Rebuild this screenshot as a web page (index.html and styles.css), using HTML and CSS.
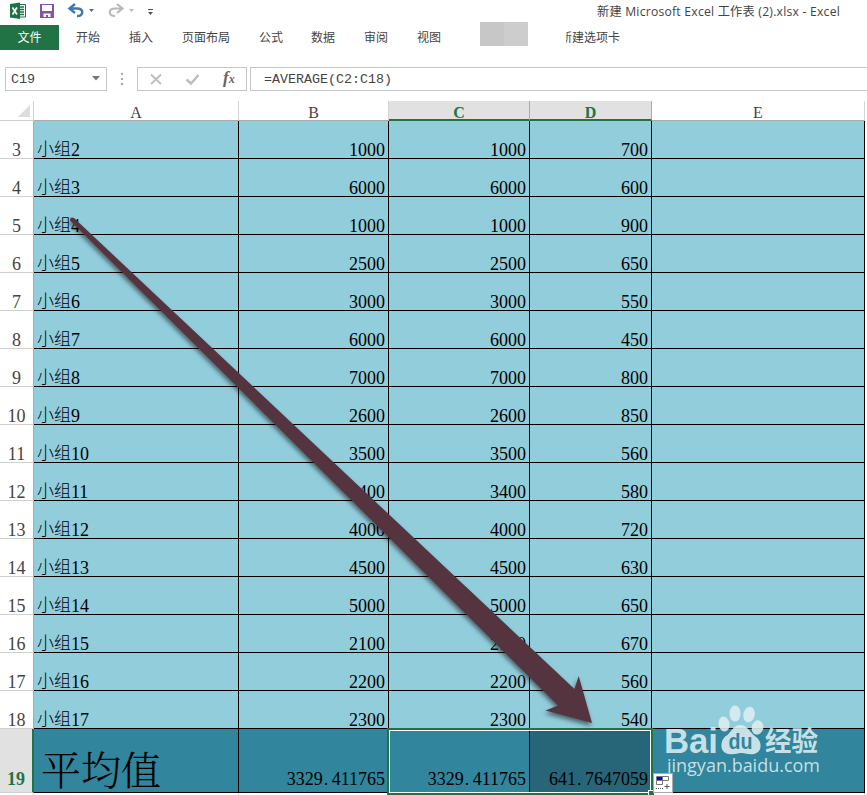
FILE: index.html
```html
<!DOCTYPE html>
<html lang="zh-CN">
<head>
<meta charset="utf-8">
<title>新建 Microsoft Excel 工作表 (2).xlsx - Excel</title>
<link rel="stylesheet" href="styles.css">
</head>
<body>
<header class="titlebar">
  <svg class="quick" width="170" height="24" viewBox="0 0 170 24">
    <path d="M10 4L20 2.500V19L10 17.500Z" fill="#1e7245"/>
    <path d="M20 4.500H25.500V17H20" fill="#fff" stroke="#1e7245"/>
    <path d="M20 7H24M20 9.500H24M20 12H24M20 14.500H24" stroke="#1e7245" stroke-width="1.300"/>
    <path d="M12.500 7.500L17 14.500M17 7.500L12.500 14.500" stroke="#fff" stroke-width="1.700"/>
    <path d="M40 4H54V18H40Z" fill="#8653a8"/>
    <path d="M42 5H52V11H42ZM43.500 13.500H50.500V17H48V15H46V17H43.500Z" fill="#fff"/>
    <path d="M75 4L69.500 8.500L75 13M70.500 8.500H77C84 8.500 84 16 77 16" fill="none" stroke="#3e78b5" stroke-width="2.400"/>
    <path d="M89 9H94L91.500 12Z" fill="#666"/>
    <path d="M117 4L122.500 8.500L117 13M121.500 8.500H115C108 8.500 108 16 115 16" fill="none" stroke="#b9b9b9" stroke-width="2.100"/>
    <path d="M129 9H134L131.500 12Z" fill="#bbb"/>
    <path d="M148 9H153V10H148ZM148 12H153L150.500 15Z" fill="#555"/>
  </svg>
  <span class="doc-title">新建 Microsoft Excel 工作表 (2).xlsx - Excel</span>
</header>
<nav class="tabs">
  <span class="file">文件</span><span class="tab">开始</span><span class="tab">插入</span><span class="tab">页面布局</span><span class="tab">公式</span><span class="tab">数据</span><span class="tab">审阅</span><span class="tab">视图</span><i class="masked"></i><span class="custom">新建选项卡</span>
</nav>
<div class="formula-bar">
  <div class="name-box"><span>C19</span><svg width="8" height="5"><path d="M0 0H8L4 4.500Z" fill="#777"/></svg></div>
  <svg class="dots" width="30" height="24"><path d="M14 6h2v2h-2zM14 11h2v2h-2zM14 16h2v2h-2z" fill="#a6a6a6"/></svg>
  <div class="tools">
    <svg width="80" height="22"><path d="M13 6.500L23 16M23 6.500L13 16" stroke="#bdbdbd" stroke-width="1.800"/><path d="M48.500 11.500L53 15.500L60.500 7" fill="none" stroke="#bdbdbd" stroke-width="2.500"/></svg>
    <em>f<small>x</small></em>
  </div>
  <div class="formula">=AVERAGE(C2:C18)</div>
</div>
<main class="sheet">
  <div class="row heads"><div class="corner"><svg width="12" height="12"><path d="M12 0V12H0Z" fill="#dcdcdc"/></svg></div><div>A</div><div>B</div><div class="picked">C</div><div class="picked">D</div><div>E</div></div>
  <div id="rows"></div>
  <div class="row total"><b>19</b><div class="label">平均值</div><div><span>3329<i class="point">.</i>411765</span></div><div class="sel"><span>3329<i class="point">.</i>411765</span></div><div class="sel active"><span>641<i class="point">.</i>7647059</span></div><div></div></div>
  <div class="row after"><b></b><div></div><div></div><div></div><div></div><div></div></div>
  <div class="selection"><i></i></div>
  <svg class="watermark" width="170" height="80" viewBox="0 0 170 80" fill="#ddeef1" fill-opacity=".88">
    <text x="4" y="50" class="bai" textLength="54" lengthAdjust="spacingAndGlyphs">Bai</text>
    <ellipse cx="64" cy="21" rx="5.500" ry="7.500" transform="rotate(-10 64 21)"/>
    <ellipse cx="75" cy="10.500" rx="5.500" ry="8"/>
    <ellipse cx="89" cy="11.500" rx="5.700" ry="7.800" transform="rotate(12 89 11.500)"/>
    <ellipse cx="97.500" cy="24.500" rx="5.800" ry="7.200" transform="rotate(12 97.500 24.500)"/>
    <path d="M80 22C73 22 72 29 66 33C60 37 59 50 69 51C74 52 77 50 81 50C86 50 89 52 94 51C103 49 102 38 96 34C89 29 88 22 80 22Z"/>
    <text x="68.500" y="46" class="du" textLength="24" lengthAdjust="spacingAndGlyphs">du</text>
    <text x="105" y="48" class="jy" textLength="53" lengthAdjust="spacingAndGlyphs">经验</text>
    <text x="7" y="69" class="url" textLength="153" lengthAdjust="spacingAndGlyphs">jingyan.baidu.com</text>
  </svg>
  <svg class="fill-options" width="20" height="20">
    <rect x=".5" y=".5" width="19" height="19" fill="#fff" stroke="#ababab"/>
    <path d="M3.500 3.500H15.500V7.500H3.500ZM9.500 3.500V7.500M3.500 7.500V11.500H9.500V7.500" fill="none" stroke="#777"/>
    <path d="M4 4H9V7H4Z" fill="#00f"/>
    <path d="M3 15.500H10" stroke="#555" stroke-dasharray="1 1"/><path d="M11.500 13.500H16.500M14 11V16" stroke="#555"/>
  </svg>
  <svg class="arrow" width="540" height="530" viewBox="60 210 540 530"><path d="M70 220.500Q70 216.500 74 218L574.500 689L578.700 676L592 723L545.500 710.500L558 705.500Z" fill="#55343f"/></svg>
</main>
<script src="sheet.js"></script>
</body>
</html>
```
FILE: styles.css
```css
* { box-sizing: border-box; }
body { margin: 0; width: 867px; height: 795px; overflow: hidden; background: #fff; color: #444; font: 12px "Noto Sans", "Noto Sans CJK SC", sans-serif; }
svg { display: block; flex: none; }
.titlebar { height: 25px; display: flex; justify-content: space-between; padding-right: 27px; }
.doc-title { font: 12.2px/24px "Open Sans", "Noto Sans CJK SC", sans-serif; letter-spacing: .22px; white-space: nowrap; }
.tabs { height: 42px; display: flex; line-height: 24px; font-family: "Noto Sans CJK SC", sans-serif; }
.file { width: 59px; height: 25px; background: #217346; color: #fff; text-align: center; margin-right: 17px; }
.tab { margin-right: 29px; white-space: nowrap; }
.tab:nth-child(5) { margin-right: 28px; }
.masked { width: 48px; height: 24px; margin: -3px 32px 0 10px; background: linear-gradient(90deg, #c7c7c7 50%, #cdcdcd 50%); }
.custom { clip-path: inset(0 0 0 6px); white-space: nowrap; }
.formula-bar { height: 24px; display: flex; padding-left: 5px; font: 13.33px/24px "Liberation Mono", monospace; }
.name-box, .tools, .formula { border: 1px solid #c6c6c6; height: 24px; }
.name-box { width: 102px; display: flex; justify-content: space-between; align-items: center; padding: 0 6px 0 5px; }
.name-box svg { margin-bottom: 2px; }
.name-box span { padding-top: 2px; }
.tools { width: 110px; display: flex; margin-right: 3px; }
.tools em { font: italic bold 17px/20px "Liberation Serif", serif; color: #666; margin-left: 5px; }
.tools small { font-size: 12px; }
.formula { flex: 1; border-right: 0; padding-left: 13px; }
.sheet { position: relative; margin-top: 10px; color: #000; font: 18px/20px "Liberation Serif", "Noto Sans CJK SC", serif; }
.row { display: grid; grid-template-columns: 34px 205px 150px 141px 122px 213px; height: 38px; }
.row > div { border-right: 1px solid #000; border-bottom: 1px solid #000; background: #92cddc; display: flex; align-items: flex-end; justify-content: flex-end; padding: 0 3px 0 0; line-height: 16px; }
.row > div:nth-child(2) { justify-content: flex-start; padding-left: 3px; }
.row > b { font-weight: normal; color: #444; display: flex; align-items: flex-end; justify-content: center; border-right: 1px solid #ababab; border-bottom: 1px solid #d0d0d0; line-height: 16px; }
.point { display: inline-block; width: 9px; padding-left: 1px; font-style: normal; }
.cjk { font: 300 17px/19px "Noto Sans CJK SC", sans-serif; margin-bottom: 1px; }
.row.heads { height: 20px; color: #444; font-size: 16px; }
.row.heads > div { background: #fff; border-right: 1px solid #d4d4d4; border-bottom: 1px solid #ababab; justify-content: center; padding: 0; line-height: 15px; }
.row.heads > .corner { padding: 0 3px 3px 0; justify-content: flex-end; border-color: #d0d0d0; }
.row.heads > .picked { background: #e1e1e1; color: #217346; font-weight: bold; border-bottom: 2px solid #217346; border-right-color: #ababab; line-height: 13px; }
.row.total { height: 64px; }
.row.total > div { background: #31859c; padding-bottom: 5px; }
.row.total > b { background: #e1e1e1; color: #217346; font-weight: bold; border-right: 2px solid #217346; padding-bottom: 5px; }
.row.total > .label { font: 40px/40px "Noto Serif CJK SC", "Noto Sans CJK SC", serif; font-weight: 350; padding: 0 0 4px 7px; }
.row.total > .active { background: #266678; }
.row.after { height: 2px; }
.row.after > div, .row.after > b { background: #fff; border: 0; border-right: 1px solid #d4d4d4; }
.selection { position: absolute; left: 387px; top: 627px; width: 266px; height: 67px; border: 2px solid #217346; box-shadow: inset 0 0 0 1px #fff; }
.selection i { position: absolute; right: -3px; bottom: -3px; width: 6px; height: 6px; background: #217346; border: solid #fff; border-width: 1px 0 0 1px; }
.watermark { position: absolute; left: 660px; top: 602px; }
.bai { font: bold 35px "Liberation Sans", sans-serif; }
.du { font: bold 22px "Liberation Sans", sans-serif; fill: #31859c; fill-opacity: 1; }
.jy { font: bold 27px "Noto Sans CJK SC", sans-serif; }
.url { font: 18px "Open Sans", sans-serif; }
.fill-options { position: absolute; left: 653px; top: 672px; }
.arrow { position: absolute; left: 60px; top: 109px; filter: drop-shadow(-1px 3px 2px rgba(0, 0, 0, .5)); }
```
FILE: sheet.js
```js
const rows = [
  [1000, 700], [6000, 600], [1000, 900], [2500, 650], [3000, 550], [6000, 450], [7000, 800], [2600, 850],
  [3500, 560], [3400, 580], [4000, 720], [4500, 630], [5000, 650], [2100, 670], [2200, 560], [2300, 540]
];
document.getElementById("rows").innerHTML = rows.map(([n, d], i) =>
  `<div class="row"><b>${i + 3}</b><div><span class="cjk">小组</span>${i + 2}</div><div>${n}</div><div>${n}</div><div>${d}</div><div></div></div>`
).join("");
```
